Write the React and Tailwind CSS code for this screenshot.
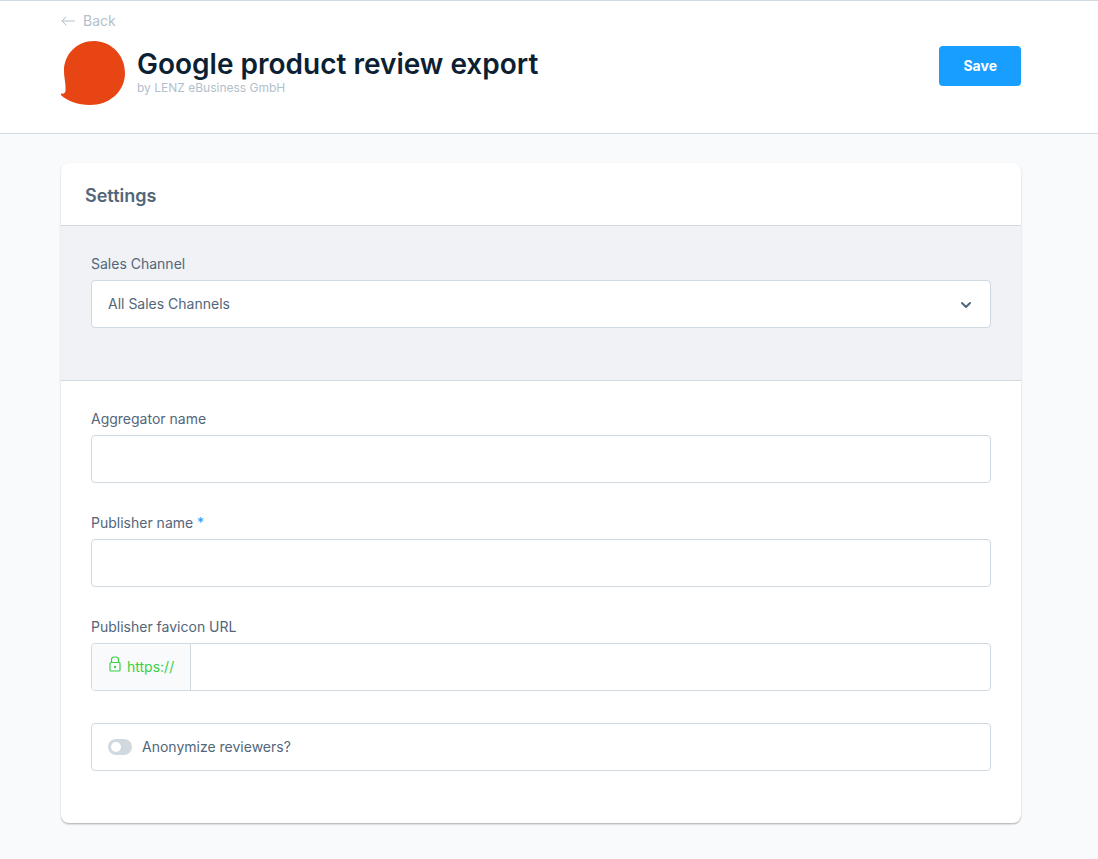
import React, { useState } from "react";

const fieldBorder = "border border-[#d1d9e0] rounded";

function BackArrow() {
  return (
    <svg width="14" height="10" viewBox="0 0 14 10" fill="none" stroke="currentColor">
      <path d="M13.500 5H1M5 1L1 5l4 4" strokeLinecap="round" strokeLinejoin="round" />
    </svg>
  );
}

function PluginLogo() {
  return (
    <svg className="shrink-0" width="64" height="64" viewBox="0 0 64 64" fill="#e74514">
      <path d="M33 0C50 0 64 14 64 32C64 51 48 64 29 64C17 64 6 60 0 54V52.500C2.500 53 4.300 52 4.500 50C5 42 3 37 3 30C3 13 16 0 33 0Z" />
    </svg>
  );
}

function LockIcon() {
  return (
    <svg width="12" height="16" viewBox="0 0 12 16" fill="none" stroke="currentColor">
      <rect x="1" y="6.500" width="10" height="8.500" rx="1" strokeWidth="1.200" />
      <path d="M2.500 6.500V3.500A2.500 2.500 0 0 1 5 1h2a2.500 2.500 0 0 1 2.500 2.500V6.500" strokeWidth="1.200" />
      <rect x="5" y="10" width="2" height="2" fill="currentColor" stroke="none" />
    </svg>
  );
}

function Field({ id, label, required, children }) {
  return (
    <div>
      <label htmlFor={id} className="block mb-2 text-sm leading-4">
        {label}
        {required && <span className="text-[#189eff]"> *</span>}
      </label>
      {children}
    </div>
  );
}

export default function App() {
  const [aggregator, setAggregator] = useState("");
  const [publisher, setPublisher] = useState("");
  const [favicon, setFavicon] = useState("");
  const [anonymize, setAnonymize] = useState(false);

  return (
    <div className="min-h-screen bg-[#f9fafb] font-['Inter',sans-serif] text-[#52667a]">
      <header className="border-y border-[#d1d9e0] bg-white pr-4">
        <div className="mx-auto max-w-[960px] pt-3 pb-7">
          <a href="#" className="flex w-fit items-center gap-2 text-sm leading-4 text-[#b3bfcc]">
            <BackArrow />
            Back
          </a>
          <div className="mt-3 flex items-start">
            <PluginLogo />
            <div className="ml-3 pt-[7px]">
              <h1 className="text-[28px] leading-8 font-semibold text-[#0d1f33]">
                Google product review export
              </h1>
              <p className="text-xs leading-4 text-[#b3bfcc]">by LENZ eBusiness GmbH</p>
            </div>
            <button
              type="button"
              className="mt-[5px] ml-auto h-10 rounded bg-[#189eff] px-6 text-sm font-bold text-white"
            >
              Save
            </button>
          </div>
        </div>
      </header>

      <main className="pt-[29px] pr-4 pb-8">
        <section className="mx-auto max-w-[960px] overflow-hidden rounded-lg bg-white shadow-[0_1px_1px_rgba(0,0,0,0.14),0_2px_1px_rgba(0,0,0,0.06),0_1px_3px_rgba(0,0,0,0.1)]">
          <h2 className="border-b border-[#d1d9e0] px-6 pt-[21px] pb-[17px] text-lg leading-6 font-semibold text-[#52667a]">
            Settings
          </h2>

          <div className="border-b border-[#d1d9e0] bg-[#f0f2f5] px-[30px] pt-[30px] pb-[52px]">
            <Field id="sales-channel" label="Sales Channel">
              <div className="relative">
                <select
                  id="sales-channel"
                  className={`${fieldBorder} block h-12 w-full appearance-none bg-white px-4 text-sm`}
                >
                  <option>All Sales Channels</option>
                </select>
                <svg
                  className="pointer-events-none absolute top-[21px] right-[19px]"
                  width="12"
                  height="8"
                  viewBox="0 0 12 8"
                  fill="none"
                  stroke="currentColor"
                  strokeWidth="2"
                >
                  <path d="M2 2l4 4 4-4" strokeLinecap="round" strokeLinejoin="round" />
                </svg>
              </div>
            </Field>
          </div>

          <div className="flex flex-col gap-8 px-[30px] pt-[30px] pb-[52px]">
            <Field id="aggregator" label="Aggregator name">
              <input
                id="aggregator"
                type="text"
                value={aggregator}
                onChange={(e) => setAggregator(e.target.value)}
                className={`${fieldBorder} block h-12 w-full bg-white px-4 text-sm`}
              />
            </Field>

            <Field id="publisher" label="Publisher name" required>
              <input
                id="publisher"
                type="text"
                required
                value={publisher}
                onChange={(e) => setPublisher(e.target.value)}
                className={`${fieldBorder} block h-12 w-full bg-white px-4 text-sm`}
              />
            </Field>

            <Field id="favicon" label="Publisher favicon URL">
              <div className={`${fieldBorder} flex h-12 overflow-hidden bg-white`}>
                <span className="flex items-center gap-[6px] border-r border-[#d1d9e0] bg-[#f9fafb] pr-4 pl-[17px] text-sm text-[#37d046]">
                  <span className="pb-[6px]">
                    <LockIcon />
                  </span>
                  https://
                </span>
                <input
                  id="favicon"
                  type="text"
                  value={favicon}
                  onChange={(e) => setFavicon(e.target.value)}
                  className="min-w-0 flex-1 px-4 text-sm"
                />
              </div>
            </Field>

            <div className={`${fieldBorder} flex h-12 items-center px-4`}>
              <input
                id="anonymize"
                type="checkbox"
                checked={anonymize}
                onChange={(e) => setAnonymize(e.target.checked)}
                className="flex h-4 w-6 appearance-none items-center rounded-full bg-[#d1d9e0] px-[3px] before:size-[10px] before:rounded-full before:bg-white before:content-[''] checked:justify-end checked:bg-[#189eff]"
              />
              <label htmlFor="anonymize" className="pl-[10px] text-sm leading-4">
                Anonymize reviewers?
              </label>
            </div>
          </div>
        </section>
      </main>
    </div>
  );
}
